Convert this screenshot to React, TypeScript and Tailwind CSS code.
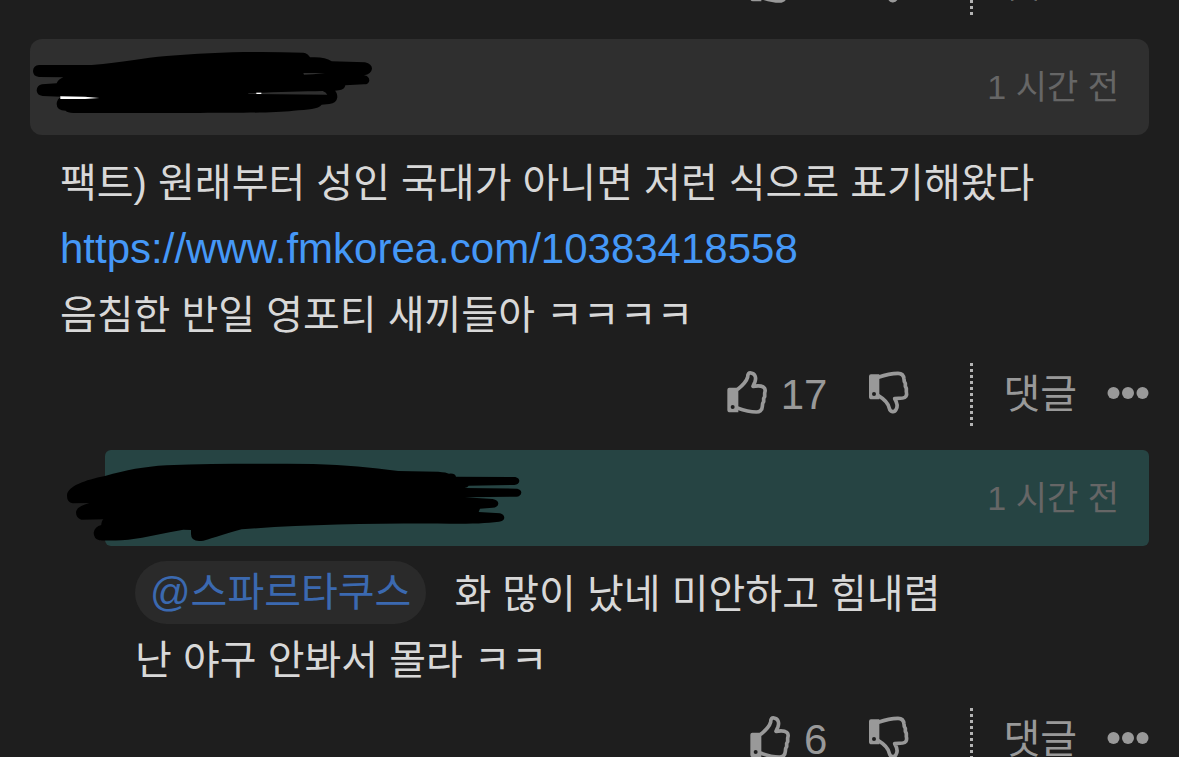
import type { ReactNode } from 'react';

function ThumbUp() {
  return (
    <svg viewBox="0 0 126 144" className="w-[42px] h-12 shrink-0" aria-hidden="true">
      <path
        fillRule="evenodd"
        fill="currentColor"
        d="M7 50H34V124H9Q1 124 1 116V56Q1 50 7 50ZM17 102A6 6 0 1 0 17 114A6 6 0 1 0 17 102Z"
      />
      <path
        d="M31 56C46 44 59 30 62 18C62 8 66 5 72 6C85 8 88 20 84 32L78 46C92 44 104 44 110 49C117 54 115 60 113 66L113 77L110 82L110 92L107 97L106 106C105 119 99 123 88 123C68 123 50 118 31 111"
        fill="none"
        stroke="currentColor"
        strokeWidth="11"
        strokeLinejoin="round"
      />
    </svg>
  );
}

function ThumbDown() {
  return (
    <svg viewBox="0 0 126 144" className="w-[42px] h-12 shrink-0" aria-hidden="true">
      <path
        fillRule="evenodd"
        fill="currentColor"
        d="M9 10H34V85H11Q3 85 3 77V16Q3 10 9 10ZM18 63A6 6 0 1 0 18 75A6 6 0 1 0 18 63Z"
      />
      <path
        d="M31 19C50 12 70 7 90 7C102 7 107 12 108 24L109 32L112 37L112 46L115 52L115 62C118 74 113 80 104 81L80 83C87 94 90 106 84 116C80 124 67 125 64 112C61 98 48 84 31 74"
        fill="none"
        stroke="currentColor"
        strokeWidth="11"
        strokeLinejoin="round"
      />
    </svg>
  );
}

function Actions({ votes }: { votes: number }) {
  return (
    <div className="flex h-[63px] shrink-0 items-center justify-end text-[#999999]">
      <button type="button" className="mr-[41px] flex items-center gap-3" aria-label={`추천 ${votes}`}>
        <ThumbUp />
        <span className="text-[42px] leading-[62px]">{votes}</span>
      </button>
      <button type="button" className="mr-[60px]" aria-label="비추천">
        <ThumbDown />
      </button>
      <span className="mr-[30px] h-full w-[3px] bg-[repeating-linear-gradient(to_bottom,#b4b4b4_0_3px,transparent_3px_6px)]" />
      <button type="button" className="mr-[30px] text-[40px] leading-[63px]">댓글</button>
      <button type="button" aria-label="더보기">
        <svg viewBox="0 0 42 48" className="w-[42px] h-12" fill="currentColor" aria-hidden="true">
          <circle cx="6.500" cy="22" r="6" />
          <circle cx="21" cy="22" r="6" />
          <circle cx="35.500" cy="22" r="6" />
        </svg>
      </button>
    </div>
  );
}

function CommentHeader({ className, children }: { className: string; children: ReactNode }) {
  return (
    <header className={`relative flex h-24 items-center justify-end px-[30px] ${className}`}>
      {children}
      <time className="text-[34px] leading-[48px] text-[#666666]">1 시간 전</time>
    </header>
  );
}

export default function App() {
  return (
    <main className="h-screen overflow-hidden bg-[#1e1e1e] px-[30px] font-['Liberation_Sans','Noto_Sans_CJK_KR',sans-serif] text-[#d8d8d8]">
      {/* Tail of the previous comment, scrolled past the top */}
      <div className="flex h-[15px] flex-col justify-end overflow-hidden">
        <Actions votes={6} />
      </div>

      <article className="mt-6">
        <CommentHeader className="rounded-xl bg-[#2f2f2f]">
          <svg viewBox="0 0 1110 360" className="absolute -top-[9px] -left-[10px] h-[120px] w-[370px]" aria-hidden="true">
            <path
              d="M57 105H215C310 97 370 84 440 78C560 67 700 63 850 68Q864 70 870 82C900 80 920 84 935 94L1035 97Q1056 102 1056 116Q1054 132 1032 136Q1048 138 1048 152Q1046 163 1032 163L976 166Q974 179 956 181L945 182Q952 188 952 202Q950 220 928 222L905 224C895 238 865 238 820 242C740 251 600 248 400 249H160Q142 248 137 242Q110 242 110 222Q111 206 124 200L68 198Q50 196 50 181Q51 166 66 163L110 160Q114 148 130 142L57 141Q39 139 39 123Q40 107 57 105Z"
              fill="#000"
            />
            <path d="M121 199L195 200L238 204L195 207H121Z" fill="#fff" />
            <path d="M850 129L915 129L880 133L852 134ZM685 190C760 186 850 184 908 183Q918 186 922 194L685 192Z" fill="#2f2f2f" />
            <path d="M709 188H724V192H709Z" fill="#fff" />
          </svg>
        </CommentHeader>
        <div className="px-[30px] py-[15px] text-[40px] leading-[66px]">
          <p>팩트) 원래부터 성인 국대가 아니면 저런 식으로 표기해왔다</p>
          <p className="text-[42px]">
            <a href="https://www.fmkorea.com/10383418558" className="text-[#4598f7]">
              https://www.fmkorea.com/10383418558
            </a>
          </p>
          <p>음침한 반일 영포티 새끼들아 ㅋㅋㅋㅋ</p>
        </div>
        <Actions votes={17} />
      </article>

      <article className="mt-6 ml-[75px]">
        <CommentHeader className="rounded-md bg-[#264443]">
          <svg viewBox="0 0 1470 360" className="absolute -top-[10px] -left-[55px] h-[120px] w-[490px]" aria-hidden="true">
            <path
              d="M68 190Q50 186 51 165C54 138 105 120 165 108C230 90 280 80 350 76C500 70 650 71 790 72C890 75 960 82 1045 93L1165 95Q1190 97 1197 101Q1215 99 1218 110L1396 111Q1408 114 1408 123Q1407 134 1393 135L1256 137Q1253 143 1244 144L1402 146Q1414 149 1414 158Q1412 169 1399 170L1245 172L1328 177Q1345 180 1345 191Q1343 202 1328 203L1290 206L1286 216L1350 220Q1363 224 1363 234Q1361 244 1347 245C1310 250 1270 251 1200 251C980 250 770 253 575 268C530 280 495 293 460 302Q423 308 423 282V270L400 269C345 278 290 292 235 299C190 302 160 302 148 301Q131 296 131 278Q134 260 154 255Q153 244 160 238L94 239Q78 234 78 217C80 202 95 197 118 189Z"
              fill="#000"
            />
          </svg>
        </CommentHeader>
        <div className="px-[30px] py-[15px] text-[40px] leading-[66px]">
          <p className="flex h-[66px] items-start">
            <a href="#parent" className="mr-7 h-[63px] rounded-full bg-[#2a2a2a] px-[15px] leading-[63px] text-[#3b69b0]">
              @스파르타쿠스
            </a>
            화 많이 났네 미안하고 힘내렴
          </p>
          <p>난 야구 안봐서 몰라 ㅋㅋ</p>
        </div>
        <Actions votes={6} />
      </article>
    </main>
  );
}
